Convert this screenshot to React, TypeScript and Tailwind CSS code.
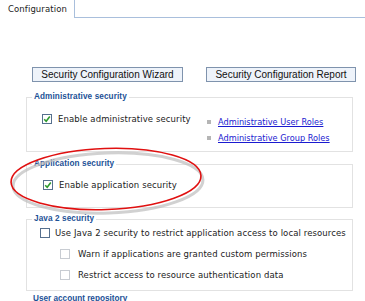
import React from "react";

const Box = ({ checked, disabled }: { checked?: boolean; disabled?: boolean }) => (
  <span
    className={
      "inline-flex h-[10px] w-[10px] shrink-0 items-center justify-center border bg-white " +
      (disabled ? "border-[#c8ccd2]" : "border-[#56708e]")
    }
  >
    {checked && (
      <svg viewBox="0 0 8 8" className="h-[8px] w-[8px]">
        <path d="M1.2 4.2 L3.2 6.2 L6.8 1.6" fill="none" stroke="#2e9a2e" strokeWidth="1.6" />
      </svg>
    )}
  </span>
);

const Legend = ({ children }: { children: React.ReactNode }) => (
  <legend className="ml-[5px] px-[2px] text-[8.2px] font-bold leading-[10px] text-[#1d5196] [font-family:'Liberation_Sans',sans-serif]">
    {children}
  </legend>
);

export default function App() {
  return (
    <div className="relative h-[301px] w-[365px] overflow-hidden bg-white text-[8.5px] tracking-[0.1px] text-[#222] [font-family:'DejaVu_Sans',sans-serif]">
      <div className="flex h-[18px]">
        <div className="flex w-[75px] items-center border-r border-[#a9bfdc] pl-[8px] pt-[1px] text-[#222]">Configuration</div>
        <div className="flex-1 border-b border-[#a9bfdc]" />
      </div>

      <div className="mt-[49px] flex h-[15px] text-[10px] tracking-normal [font-family:'Liberation_Sans',sans-serif]">
        <button className="ml-[32px] w-[151px] border border-[#7f93ad] bg-[#eef3fa] leading-[13px] text-[#111]">
          Security Configuration Wizard
        </button>
        <button className="ml-[23px] w-[150px] border border-[#7f93ad] bg-[#eef3fa] leading-[13px] text-[#111]">
          Security Configuration Report
        </button>
      </div>

      <fieldset className="mt-[10px] ml-[26px] h-[60px] w-[327px] border border-[#e2e2e2]">
        <Legend>Administrative security</Legend>
        <div className="flex pl-[15px] pt-[6px]">
          <label className="flex w-[165px] items-center gap-[6px] self-start pt-[5px]">
            <Box checked />
            <span>Enable administrative security</span>
          </label>
          <ul className="flex flex-col gap-[4px] pt-[8px] text-[8.2px] tracking-normal">
            <li className="flex items-center gap-[7px]">
              <span className="h-[4px] w-[4px] bg-[#b5b5b5]" />
              <a className="text-[#1a1ad0] underline">Administrative User Roles</a>
            </li>
            <li className="flex items-center gap-[7px]">
              <span className="h-[4px] w-[4px] bg-[#b5b5b5]" />
              <a className="text-[#1a1ad0] underline">Administrative Group Roles</a>
            </li>
          </ul>
        </div>
      </fieldset>

      <fieldset className="mt-[7px] ml-[26px] h-[49px] w-[327px] border border-[#e2e2e2]">
        <Legend>Application security</Legend>
        <label className="flex items-center gap-[6px] pl-[16px] pt-[10px]">
          <Box checked />
          <span>Enable application security</span>
        </label>
      </fieldset>

      <fieldset className="mt-[6px] ml-[26px] h-[77px] w-[327px] border border-[#e2e2e2]">
        <Legend>Java 2 security</Legend>
        <div className="flex flex-col gap-[8px] pl-[13px] pt-[3px]">
          <label className="flex items-center gap-[5px]">
            <Box />
            <span>Use Java 2 security to restrict application access to local resources</span>
          </label>
          <label className="ml-[20px] flex items-center gap-[8px]">
            <Box disabled />
            <span>Warn if applications are granted custom permissions</span>
          </label>
          <label className="ml-[20px] flex items-center gap-[8px]">
            <Box disabled />
            <span>Restrict access to resource authentication data</span>
          </label>
        </div>
      </fieldset>

      <div className="mt-[3px] ml-[33px] text-[8.2px] font-bold leading-[10px] tracking-normal text-[#1d5196] [font-family:'Liberation_Sans',sans-serif]">
        User account repository
      </div>

      <svg className="pointer-events-none absolute left-0 top-0" width="365" height="301">
        <ellipse cx="106" cy="180" rx="95" ry="30" fill="none" stroke="#bdbdbd" strokeWidth="3" transform="translate(2 3) rotate(-2 106 180)" opacity="0.7" />
        <ellipse cx="106" cy="179" rx="95" ry="30.5" fill="none" stroke="#e01010" strokeWidth="1.6" transform="rotate(-2 106 179)" />
      </svg>
    </div>
  );
}
